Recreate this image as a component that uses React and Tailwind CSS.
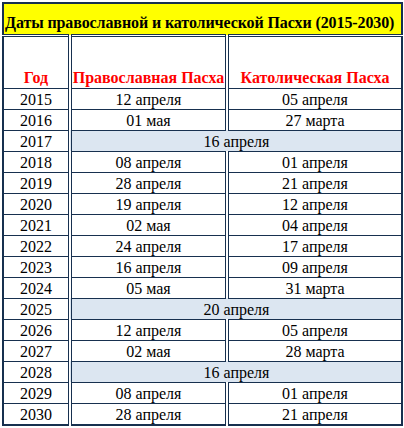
import React from "react";

const rows = [
  ["2015", "12 апреля", "05 апреля"],
  ["2016", "01 мая", "27 марта"],
  ["2017", "16 апреля"],
  ["2018", "08 апреля", "01 апреля"],
  ["2019", "28 апреля", "21 апреля"],
  ["2020", "19 апреля", "12 апреля"],
  ["2021", "02 мая", "04 апреля"],
  ["2022", "24 апреля", "17 апреля"],
  ["2023", "16 апреля", "09 апреля"],
  ["2024", "05 мая", "31 марта"],
  ["2025", "20 апреля"],
  ["2026", "12 апреля", "05 апреля"],
  ["2027", "02 мая", "28 марта"],
  ["2028", "16 апреля"],
  ["2029", "08 апреля", "01 апреля"],
  ["2030", "28 апреля", "21 апреля"],
];

const App = () => {
  return (
    <div className="w-[404px] h-[428px] bg-white pl-[2px] pt-[2px] text-black font-['Liberation_Serif','Times_New_Roman',serif]">
      <table className="w-[399px] table-fixed border-collapse border-2 border-[#17304f]">
        <colgroup>
          <col className="w-[67px]" />
          <col className="w-[157px]" />
          <col className="w-[175px]" />
        </colgroup>
        <tbody>
          {/* Title */}
          <tr>
            <td
              colSpan={3}
              className="h-[32px] p-0 bg-[#ffff00] border-b-[3px] border-double border-[#17304f] align-bottom pb-[2px] text-left pl-[1px] text-[16px] font-bold leading-[18px] whitespace-nowrap tracking-[-0.1px]"
            >
              Даты православной и католической Пасхи (2015-2030)
            </td>
          </tr>

          {/* Header */}
          <tr className="text-[#ff0000] font-bold text-[16px]">
            <td className="h-[53px] p-0 border-r-[4px] border-b border-double border-[#17304f] align-bottom text-center leading-[18px] pb-[1px]">
              Год
            </td>
            <td className="h-[53px] p-0 border-r-[4px] border-b border-double border-[#17304f] align-bottom text-center leading-[18px] pb-[1px] whitespace-nowrap">
              Православная Пасха
            </td>
            <td className="h-[53px] p-0 border-b border-[#17304f] align-bottom text-center leading-[18px] pb-[1px] whitespace-nowrap">
              Католическая Пасха
            </td>
          </tr>

          {/* Data */}
          {rows.map((r) => (
            <tr key={r[0]} className="text-[16px]">
              <td className="h-[20px] p-0 border-r-[4px] border-b border-double border-[#17304f] text-center leading-[19px] pt-[1px]">
                {r[0]}
              </td>
              {r.length === 2 ? (
                <td
                  colSpan={2}
                  className="h-[20px] p-0 bg-[#dce6f1] border-b border-[#17304f] text-center leading-[19px] pt-[1px]"
                >
                  {r[1]}
                </td>
              ) : (
                <>
                  <td className="h-[20px] p-0 border-r-[4px] border-b border-double border-[#17304f] text-center leading-[19px] pt-[1px]">
                    {r[1]}
                  </td>
                  <td className="h-[20px] p-0 border-b border-[#17304f] text-center leading-[19px] pt-[1px]">
                    {r[2]}
                  </td>
                </>
              )}
            </tr>
          ))}
        </tbody>
      </table>
    </div>
  );
};

export default App;
